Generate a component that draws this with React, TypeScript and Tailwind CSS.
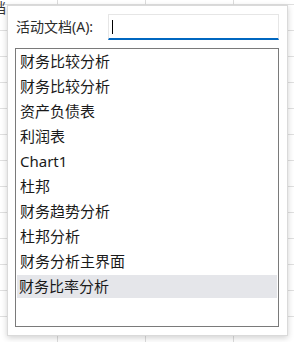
import React from "react";

const items = [
  "财务比较分析",
  "财务比较分析",
  "资产负债表",
  "利润表",
  "Chart1",
  "杜邦",
  "财务趋势分析",
  "杜邦分析",
  "财务分析主界面",
  "财务比率分析",
];

const font = { fontFamily: '"Noto Sans", "Noto Sans CJK SC", sans-serif' };

export default function App() {
  return (
    <div
      className="relative w-[294px] h-[342px] overflow-hidden pt-[5px] pl-[7px] bg-white bg-[linear-gradient(to_right,transparent_57px,#dcdcdc_57px,#dcdcdc_58px,transparent_58px,transparent_145px,#dcdcdc_145px,#dcdcdc_146px,transparent_146px,transparent_233px,#dcdcdc_233px,#dcdcdc_234px,transparent_234px),repeating-linear-gradient(to_bottom,transparent_0,transparent_4px,#e0e0e0_4px,#e0e0e0_5px,transparent_5px,transparent_26px)]"
      style={font}
    >
      {/* cell text peeking out behind the dialog */}
      <div className="absolute left-[-8px] top-[-3px] text-[14px] text-[#333]">档</div>

      {/* dialog */}
      <div className="relative w-[281px] h-[331px] bg-white border border-[#dadada] shadow-[0_2px_6px_rgba(0,0,0,0.18)] pt-[8px] pl-[8px]">
        <div className="flex items-center h-[26px]">
          <span className="w-[92px] text-[14px] text-[#2b2b2b] leading-none">活动文档(A):</span>
          <div className="w-[171px] h-[26px] flex items-center pl-[3px] border border-[#e6e6e6] border-b-2 border-b-[#0067c0] bg-white">
            <div className="w-px h-[14px] bg-black" />
          </div>
        </div>
        <div className="mt-[8px] -ml-px w-[264px] h-[279px] border border-[#7a7a7a] flex flex-col">
          {items.map((t, i) => {
            const sel = i === items.length - 1;
            return (
              <div
                key={i}
                className={
                  sel
                    ? "h-[23px] m-px flex items-center bg-[#e5e6ea] pl-[2px]"
                    : "h-[25px] flex items-center pl-[4px]"
                }
              >
                <span className="text-[15px] text-[#1a1a1a] leading-none">{t}</span>
              </div>
            );
          })}
        </div>
      </div>
    </div>
  );
}
